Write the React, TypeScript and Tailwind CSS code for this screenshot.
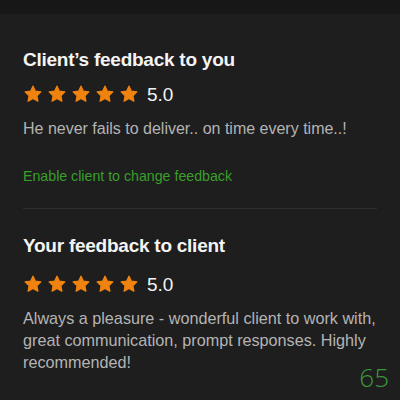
import React from "react";

const STAR_PATH =
  "M12 2.6l2.85 6.05 6.6.8-4.86 4.56 1.25 6.54L12 17.3l-5.84 3.25 1.25-6.54L2.55 9.45l6.6-.8z";

function Stars({ count = 5 }: { count?: number }) {
  return (
    <div className="flex items-center gap-[4px]">
      {Array.from({ length: count }).map((_, i) => (
        <svg key={i} viewBox="0 0 24 24" className="w-[20px] h-[20px]">
          <path d={STAR_PATH} fill="#f0820f" stroke="#f0820f" strokeWidth="1.6" strokeLinejoin="round" />
        </svg>
      ))}
    </div>
  );
}

function Rating({ value }: { value: string }) {
  return (
    <div className="flex items-center gap-[8px]">
      <Stars />
      <span className="text-[19px] leading-none text-[#f2f2f2]">{value}</span>
    </div>
  );
}

export default function App() {
  return (
    <div
      className="w-[400px] h-[400px] overflow-hidden bg-[#1e1e1e] relative"
      style={{ fontFamily: '"Liberation Sans", Arial, sans-serif' }}
    >
      {/* header strip */}
      <div className="h-[14px] bg-[#171717]" />

      <div className="px-[23px]">
        {/* client feedback */}
        <section className="pt-[34px] pb-[23px] border-b border-[#2e2e2e]">
          <h2 className="text-[19px] leading-[24px] font-bold text-[#f4f4f4] tracking-[-0.25px]">
            Client’s feedback to you
          </h2>
          <div className="mt-[12px]">
            <Rating value="5.0" />
          </div>
          <p className="mt-[14px] text-[16px] leading-[22px] text-[#b4b4b4]">
            He never fails to deliver.. on time every time..!
          </p>
          <button className="mt-[27px] block text-[14.2px] leading-[18px] text-[#3a9e2a]">
            Enable client to change feedback
          </button>
        </section>

        {/* your feedback */}
        <section className="pt-[25px]">
          <h2 className="text-[19px] leading-[24px] font-bold text-[#f4f4f4] tracking-[-0.25px]">
            Your feedback to client
          </h2>
          <div className="mt-[16px]">
            <Rating value="5.0" />
          </div>
          <p className="mt-[13px] text-[16.2px] leading-[22px] text-[#b4b4b4]">
            Always a pleasure - wonderful client to work with, great communication, prompt responses. Highly
            recommended!
          </p>
        </section>
      </div>

      <span
        className="absolute right-[11px] bottom-[14px] text-[26px] leading-[17px] font-light text-[#3a9a3a]"
        style={{ fontFamily: '"Open Sans", sans-serif' }}
      >
        65
      </span>
    </div>
  );
}
